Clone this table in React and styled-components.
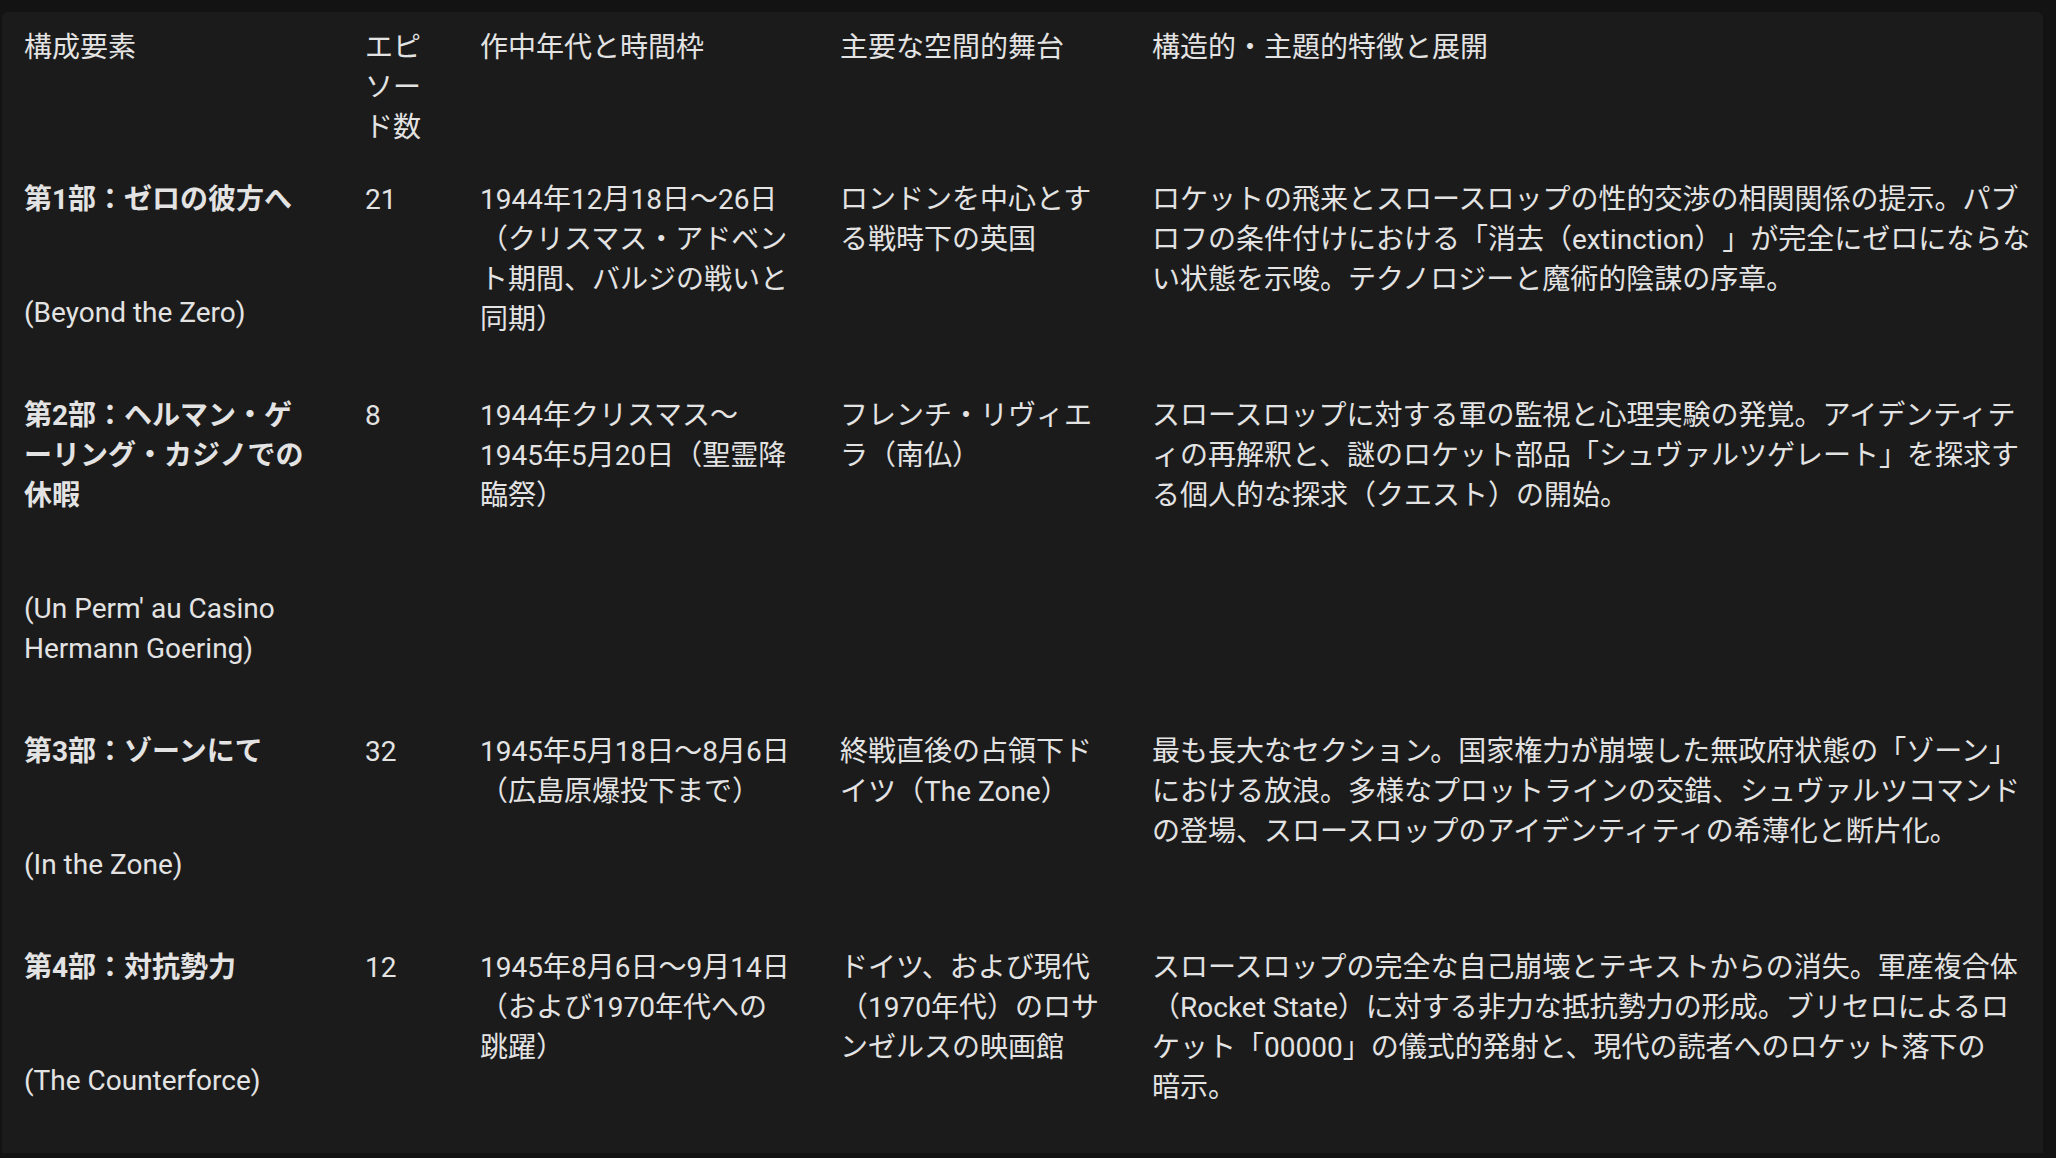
import React from 'react'
import styled, { createGlobalStyle } from 'styled-components'

const GlobalStyle = createGlobalStyle`
  html, body {
    margin: 0;
    padding: 0;
    background: #131313;
  }
  body {
    font-family: 'Roboto', 'Noto Sans CJK JP', sans-serif;
    color: #e3e3e3;
    -webkit-font-smoothing: antialiased;
  }
`

const COLUMNS = [
  { key: 'part', label: '構成要素', width: 341 },
  { key: 'episodes', label: 'エピソード数', width: 115 },
  { key: 'time', label: '作中年代と時間枠', width: 360 },
  { key: 'place', label: '主要な空間的舞台', width: 312 },
  { key: 'notes', label: '構造的・主題的特徴と展開', width: 890, last: true },
]

// notes are kept line by line so the wrap matches the original table
const ROWS = [
  {
    title: '第1部：ゼロの彼方へ',
    subtitle: '(Beyond the Zero)',
    episodes: '21',
    time: '1944年12月18日～26日（クリスマス・アドベント期間、バルジの戦いと同期）',
    place: 'ロンドンを中心とする戦時下の英国',
    notes: [
      'ロケットの飛来とスロースロップの性的交渉の相関関係の提示。パブ',
      'ロフの条件付けにおける「消去（extinction）」が完全にゼロにならな',
      'い状態を示唆。テクノロジーと魔術的陰謀の序章。',
    ],
  },
  {
    title: '第2部：ヘルマン・ゲーリング・カジノでの休暇',
    subtitle: "(Un Perm' au Casino Hermann Goering)",
    episodes: '8',
    time: '1944年クリスマス～1945年5月20日（聖霊降臨祭）',
    place: 'フレンチ・リヴィエラ（南仏）',
    notes: [
      'スロースロップに対する軍の監視と心理実験の発覚。アイデンティテ',
      'ィの再解釈と、謎のロケット部品「シュヴァルツゲレート」を探求す',
      'る個人的な探求（クエスト）の開始。',
    ],
  },
  {
    title: '第3部：ゾーンにて',
    subtitle: '(In the Zone)',
    episodes: '32',
    time: '1945年5月18日～8月6日（広島原爆投下まで）',
    place: '終戦直後の占領下ドイツ（The Zone）',
    notes: [
      '最も長大なセクション。国家権力が崩壊した無政府状態の「ゾーン」',
      'における放浪。多様なプロットラインの交錯、シュヴァルツコマンド',
      'の登場、スロースロップのアイデンティティの希薄化と断片化。',
    ],
  },
  {
    title: '第4部：対抗勢力',
    subtitle: '(The Counterforce)',
    episodes: '12',
    time: '1945年8月6日～9月14日（および1970年代への跳躍）',
    place: 'ドイツ、および現代（1970年代）のロサンゼルスの映画館',
    notes: [
      'スロースロップの完全な自己崩壊とテキストからの消失。軍産複合体',
      '（Rocket State）に対する非力な抵抗勢力の形成。ブリセロによるロ',
      'ケット「00000」の儀式的発射と、現代の読者へのロケット落下の',
      '暗示。',
    ],
  },
]

const Page = styled.div`
  min-height: 1158px;
  box-sizing: border-box;
  padding: 12px 13px 0 2px;
`

const Panel = styled.div`
  background: #1b1b1b;
  border-radius: 6px 6px 0 0;
  padding: 0 0 5px 22px;
`

const Table = styled.table`
  table-layout: fixed;
  width: 2018px;
  border-collapse: collapse;
  border-spacing: 0;
  font-size: 28px;
  line-height: 40px;
  line-break: normal;
  text-spacing-trim: space-all;
`

const HeadCell = styled.th`
  box-sizing: border-box;
  width: ${(p) => p.$w}px;
  padding: 16px ${(p) => (p.$last ? 0 : 48)}px 16px 0;
  text-align: left;
  vertical-align: top;
  font-weight: 400;
  color: #e3e3e3;
`

const Cell = styled.td`
  box-sizing: border-box;
  padding: 16px ${(p) => (p.$last ? 0 : 48)}px 16px 0;
  vertical-align: top;
  text-align: left;
  color: #e3e3e3;
`

const Title = styled.div`
  font-weight: 700;
`

const Subtitle = styled.div`
  margin: 73px 0 31px;
`

const NoteLine = styled.span`
  display: block;
  white-space: nowrap;
`

export default function App() {
  return (
    <>
      <GlobalStyle />
      <Page lang="ja">
        <Panel>
          <Table>
            <thead>
              <tr>
                {COLUMNS.map((c) => (
                  <HeadCell key={c.key} $w={c.width} $last={c.last}>
                    {c.label}
                  </HeadCell>
                ))}
              </tr>
            </thead>
            <tbody>
              {ROWS.map((row) => (
                <tr key={row.subtitle}>
                  <Cell>
                    <Title>{row.title}</Title>
                    <Subtitle>{row.subtitle}</Subtitle>
                  </Cell>
                  <Cell>{row.episodes}</Cell>
                  <Cell>{row.time}</Cell>
                  <Cell>{row.place}</Cell>
                  <Cell $last>
                    {row.notes.map((n) => (
                      <NoteLine key={n}>{n}</NoteLine>
                    ))}
                  </Cell>
                </tr>
              ))}
            </tbody>
          </Table>
        </Panel>
      </Page>
    </>
  )
}
